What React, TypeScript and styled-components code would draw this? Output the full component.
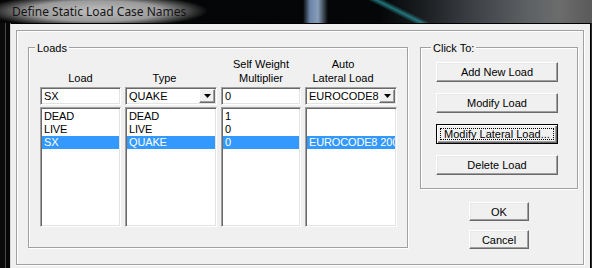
import React from 'react';
import styled, { createGlobalStyle } from 'styled-components';

const GlobalStyle = createGlobalStyle`
  html, body {
    margin: 0;
    padding: 0;
    background: #000;
  }
  body {
    width: 592px;
    height: 268px;
    overflow: hidden;
  }
`;

const face = '#f0f0f0';
const shadow = '#a0a0a0';
const darkShadow = '#696969';
const selection = '#3399ff';

const Window = styled.div`
  width: 592px;
  height: 268px;
  display: flex;
  flex-direction: column;
  overflow: hidden;
  background: #050505;
  font-family: 'Liberation Sans', Arial, sans-serif;
  font-size: 11px;
  color: #000;
`;

const TitleBar = styled.div`
  height: 23px;
  flex: none;
  display: flex;
  align-items: center;
  padding-left: 12px;
  background:
    radial-gradient(ellipse 112px 17px at 96px 11px, rgba(200, 200, 200, 0.95) 0%, rgba(180, 180, 180, 0.85) 60%, rgba(0, 0, 0, 0) 100%),
    linear-gradient(26.6deg, rgba(0, 0, 0, 0) 185px, rgba(40, 150, 160, 0.75) 189px, rgba(0, 0, 0, 0) 193px),
    linear-gradient(90deg, rgba(0, 0, 0, 0) 303px, rgba(125, 155, 195, 0.85) 310px, rgba(150, 175, 205, 0.9) 318px, rgba(0, 0, 0, 0) 328px),
    linear-gradient(90deg, #050505 0, #040607 380px, #1b1f22 425px, #3b3f43 470px, #5e6265 530px, #6c6c6c 560px, #5a5a5a 592px);
`;

const Title = styled.span`
  font-family: 'Noto Sans', 'Open Sans', sans-serif;
  font-size: 12px;
  color: #141414;
  margin-top: -1px;
`;

const Body = styled.div`
  flex: 1;
  display: flex;
  min-height: 0;
`;

const LeftChrome = styled.div`
  width: 10px;
  flex: none;
  background: linear-gradient(90deg, #0a0a0a 0 5px, #4a4a4a 5px 6px, #060606 6px 10px);
`;

const RightChrome = styled.div`
  width: 1px;
  flex: none;
  background: #2a2a2a;
`;

const Client = styled.div`
  flex: 1;
  display: flex;
  background: ${face};
  border-top: 1px solid #000;
  border-left: 1px solid #d4d4d4;
  border-right: 1px solid #000;
  padding: 6px 6px 3px 5px;
`;

const Frame = styled.div`
  flex: 1;
  display: flex;
  align-items: flex-start;
  gap: 12px;
  padding: 16px 0 0 11px;
  border: 1px solid ${shadow};
  box-shadow: inset 1px 1px 0 #fff, 1px 1px 0 #fff;
`;

const Group = styled.div<{ $width: number; $pad: string }>`
  width: ${(p) => p.$width}px;
  box-sizing: border-box;
  display: flex;
  flex-direction: column;
  padding: ${(p) => p.$pad};
  border: 1px solid ${shadow};
  box-shadow: inset 1px 1px 0 #fff, 1px 1px 0 #fff;
`;

const Legend = styled.div`
  align-self: flex-start;
  margin: -7px 0 0 -5px;
  padding: 0 2px;
  line-height: 14px;
  background: ${face};
`;

const Grid = styled.div`
  display: grid;
  grid-template-columns: 81px 92px 80px 92px;
  grid-template-rows: 28px 18px 120px;
  column-gap: 4px;
  row-gap: 2px;
  margin-top: 2px;
`;

const Header = styled.div<{ $shift: number }>`
  align-self: end;
  text-align: center;
  line-height: 14px;
  padding-right: ${(p) => p.$shift}px;
`;

const Sunken = styled.div`
  box-sizing: border-box;
  background: #fff;
  border: 1px solid;
  border-color: ${shadow} #fff #fff ${shadow};
  box-shadow: inset 1px 1px 0 ${darkShadow}, inset -1px -1px 0 #e3e3e3;
`;

const Field = styled(Sunken)`
  display: flex;
  align-items: center;
  padding: 1px 1px 1px 3px;
  line-height: 13px;
  white-space: nowrap;
  overflow: hidden;
`;

const FieldText = styled.span`
  flex: 1;
  overflow: hidden;
`;

const DropButton = styled.div`
  width: 16px;
  height: 14px;
  flex: none;
  display: flex;
  align-items: center;
  justify-content: center;
  box-sizing: border-box;
  background: ${face};
  border: 1px solid;
  border-color: #fff ${darkShadow} ${darkShadow} #fff;
  box-shadow: inset -1px -1px 0 ${shadow};
`;

const ListBox = styled(Sunken)`
  padding: 2px 1px 0 1px;
  overflow: hidden;
`;

const Row = styled.div<{ $selected: boolean }>`
  height: 13px;
  line-height: 13px;
  padding-left: 2px;
  white-space: nowrap;
  overflow: hidden;
  letter-spacing: -0.15px;
  background: ${(p) => (p.$selected ? selection : 'transparent')};
  color: ${(p) => (p.$selected ? '#fff' : '#000')};
`;

const RightColumn = styled.div`
  display: flex;
  flex-direction: column;
  align-items: center;
`;

const ButtonStack = styled.div`
  display: flex;
  flex-direction: column;
  gap: 11px;
  margin-top: 7px;
`;

const Button = styled.div<{ $width: number; $height?: number; $default?: boolean }>`
  width: ${(p) => p.$width}px;
  height: ${(p) => p.$height ?? 20}px;
  box-sizing: border-box;
  display: flex;
  align-items: center;
  justify-content: center;
  background: ${face};
  border: 1px solid;
  border-color: ${(p) => (p.$default ? '#000' : `#fff ${darkShadow} ${darkShadow} #fff`)};
  box-shadow: ${(p) =>
    p.$default
      ? `inset 1px 1px 0 #fff, inset -1px -1px 0 ${darkShadow}, inset -2px -2px 0 ${shadow}`
      : `inset -1px -1px 0 ${shadow}, inset 1px 1px 0 #e8e8e8`};
  padding: 0 3px;
`;

const FocusRing = styled.span`
  flex: 1;
  align-self: stretch;
  margin: 3px 0;
  display: flex;
  align-items: center;
  justify-content: center;
  border: 1px dotted #000;
`;

const Dialog = styled.div`
  display: flex;
  flex-direction: column;
  align-items: center;
  gap: 9px;
  margin-top: 13px;
`;

const Arrow = () => (
  <svg width="7" height="4" viewBox="0 0 7 4">
    <path d="M0 0h7L3.5 4z" fill="#000" />
  </svg>
);

const columns = [
  { header: ['Load'], shift: 0, value: 'SX', combo: false, items: ['DEAD', 'LIVE', 'SX'] },
  { header: ['Type'], shift: 13, value: 'QUAKE', combo: true, items: ['DEAD', 'LIVE', 'QUAKE'] },
  { header: ['Self Weight', 'Multiplier'], shift: 0, value: '0', combo: false, items: ['1', '0', '0'] },
  { header: ['Auto', 'Lateral Load'], shift: 16, value: 'EUROCODE8', combo: true, items: ['', '', 'EUROCODE8 2004'] },
];

const selected = 2;

const actions = ['Add New Load', 'Modify Load', 'Modify Lateral Load...', 'Delete Load'];

const App = () => (
  <>
    <GlobalStyle />
    <Window>
      <TitleBar>
        <Title>Define Static Load Case Names</Title>
      </TitleBar>
      <Body>
        <LeftChrome />
        <Client>
          <Frame>
            <Group $width={380} $pad="0 10px 20px 11px">
              <Legend>Loads</Legend>
              <Grid>
                {columns.map((c) => (
                  <Header key={c.header[0]} $shift={c.shift}>
                    {c.header.map((line) => (
                      <div key={line}>{line}</div>
                    ))}
                  </Header>
                ))}
                {columns.map((c) => (
                  <Field key={c.header[0]}>
                    <FieldText>{c.value}</FieldText>
                    {c.combo && (
                      <DropButton>
                        <Arrow />
                      </DropButton>
                    )}
                  </Field>
                ))}
                {columns.map((c) => (
                  <ListBox key={c.header[0]}>
                    {c.items.map((item, i) => (
                      <Row key={i} $selected={i === selected}>
                        {item}
                      </Row>
                    ))}
                  </ListBox>
                ))}
              </Grid>
            </Group>
            <RightColumn>
              <Group $width={158} $pad="0 0 13px 15px">
                <Legend>Click To:</Legend>
                <ButtonStack>
                  {actions.map((a) =>
                    a.startsWith('Modify Lateral') ? (
                      <Button key={a} $width={122} $default>
                        <FocusRing>{a}</FocusRing>
                      </Button>
                    ) : (
                      <Button key={a} $width={122}>
                        {a}
                      </Button>
                    )
                  )}
                </ButtonStack>
              </Group>
              <Dialog>
                <Button $width={60} $height={19}>OK</Button>
                <Button $width={60} $height={19}>Cancel</Button>
              </Dialog>
            </RightColumn>
          </Frame>
        </Client>
        <RightChrome />
      </Body>
    </Window>
  </>
);

export default App;
